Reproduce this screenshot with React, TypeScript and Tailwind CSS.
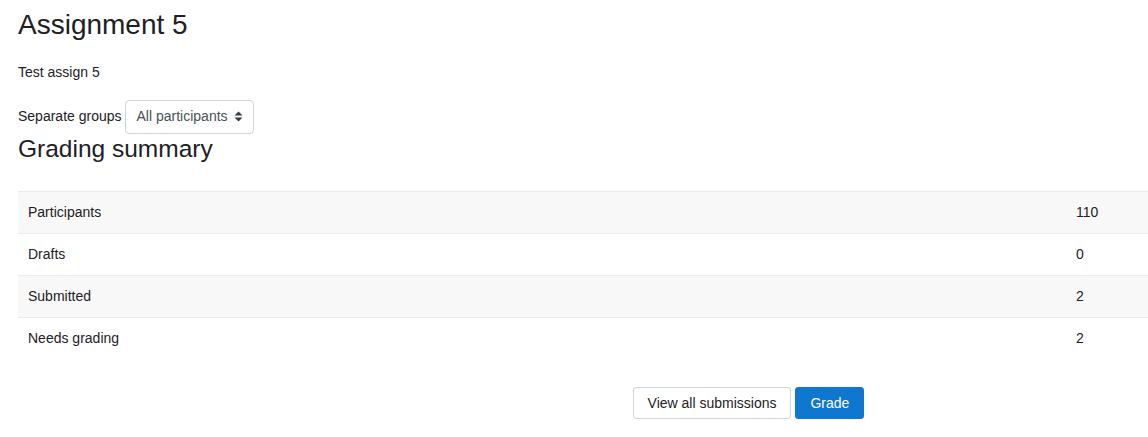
import React from "react"

const rows = [
  { label: "Participants", value: "110" },
  { label: "Drafts", value: "0" },
  { label: "Submitted", value: "2" },
  { label: "Needs grading", value: "2" },
]

function SelectCaret() {
  return (
    <svg width="9" height="11" viewBox="0 0 9 11" className="ml-[6px]">
      <path d="M4.5 0.5 L8.5 4.5 L0.5 4.5 Z" fill="#343a40" />
      <path d="M4.5 10.5 L8.5 6.5 L0.5 6.5 Z" fill="#343a40" />
    </svg>
  )
}

export default function App() {
  return (
    <div className="w-screen min-h-screen overflow-hidden bg-white text-[#1d2125] font-['Liberation_Sans',Arial,sans-serif] text-[14px] leading-[21px]">
      <div className="w-[1461px] ml-[18px]">
        <h2 className="mt-[8px] text-[28px] leading-[33.6px] font-normal">Assignment 5</h2>
        <p className="mt-[20px]">Test assign 5</p>

        <div className="mt-[17px] flex items-center">
          <span>Separate groups</span>
          <div className="ml-[3px] h-[34px] flex items-center border border-[#ced4da] rounded-[4px] pl-[11px] pr-[10px] text-[#495057]">
            <span>All participants</span>
            <SelectCaret />
          </div>
        </div>

        <h3 className="text-[24.5px] leading-[29.4px] font-normal">Grading summary</h3>

        <div className="mt-[28px]">
          {rows.map((r, i) => (
            <div
              key={r.label}
              className={
                "flex h-[42px] items-center border-t border-[#e9ecef] " +
                (i % 2 === 0 ? "bg-[#f8f8f8]" : "bg-white")
              }
            >
              <div className="w-[1047px] pl-[10px]">{r.label}</div>
              <div className="flex-1 pl-[11px]">{r.value}</div>
            </div>
          ))}
        </div>

        <div className="mt-[28px] flex justify-center gap-[4px]">
          <button className="h-[32px] px-[14px] border border-[#ced4da] rounded-[3px] bg-white text-[#1d2125]">
            View all submissions
          </button>
          <button className="h-[32px] px-[14px] border border-[#0f77cf] rounded-[3px] bg-[#0f77cf] text-white">
            Grade
          </button>
        </div>
      </div>
    </div>
  )
}
